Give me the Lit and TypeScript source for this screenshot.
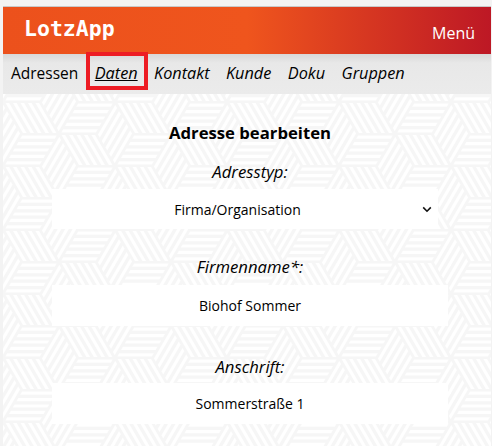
import { LitElement, html, css, unsafeCSS } from "lit";
import { customElement } from "lit/decorators.js";

type P = [number, number];
const L = 112 / 3;
const R = 32;
const S = L / 2;
const fmt = (p: P) => `${p[0].toFixed(2)},${p[1].toFixed(2)}`;

function rhomb(o: P, u: P, v: P): string {
  let out = "";
  const inset = 0.035;
  for (let k = 0; k < 5; k++) {
    const a = (k + 0.25) / 5;
    const b = (k + 0.75) / 5;
    const at = (s: number, t: number): P => [o[0] + u[0] * s + v[0] * t, o[1] + u[1] * s + v[1] * t];
    out += `<polygon points='${fmt(at(a, inset))} ${fmt(at(b, inset))} ${fmt(at(b, 1 - inset))} ${fmt(at(a, 1 - inset))}'/>`;
  }
  return out;
}

function tile(): string {
  let shapes = "";
  const x0 = 18.67;
  const y0 = 40;
  for (let i = -2; i <= 2; i++) {
    for (let j = -3; j <= 3; j++) {
      const ox = x0 + i * 112 + j * 56;
      const oy = y0 + j * 32;
      shapes += rhomb([ox, oy], [-S, R], [L, 0]);
      shapes += rhomb([ox - S, oy - R], [L, 0], [S, R]);
      shapes += rhomb([ox + L, oy], [-S, -R], [S, -R]);
    }
  }
  const svg = `<svg xmlns='http://www.w3.org/2000/svg' width='112' height='64' viewBox='0 0 112 64'><rect width='112' height='64' fill='#f6f6f6'/><g fill='#fff'>${shapes}</g></svg>`;
  return `url("data:image/svg+xml,${encodeURIComponent(svg)}")`;
}

const chevron = `url("data:image/svg+xml,${encodeURIComponent(
  "<svg xmlns='http://www.w3.org/2000/svg' width='10' height='7' viewBox='0 0 10 7'><path d='M1.2 1.4 5 5.2 8.8 1.4' fill='none' stroke='#111' stroke-width='1.6'/></svg>"
)}")`;

@customElement("app-root")
export class AppRoot extends LitElement {
  static styles = css`
    :host {
      display: block;
      height: 446px;
      overflow: hidden;
      box-sizing: border-box;
      padding: 7px 1px 0 3px;
      background: #f3f3f3;
      font-family: "Open Sans", "Noto Sans", sans-serif;
      color: #000;
    }
    .header {
      height: 47px;
      box-shadow: 0 -1px 0 #c9c9c9;
      background: linear-gradient(90deg, #ec511c 0%, #ef551d 50%, #bd1825 100%);
      display: flex;
      align-items: center;
      justify-content: space-between;
      padding: 0 16px 0 21px;
      color: #fff;
      position: relative;
    }
    .logo {
      font-family: "DejaVu Sans Mono", monospace;
      font-weight: 700;
      font-size: 21.5px;
      position: relative;
      top: -2px;
    }
    .menu {
      font-size: 16px;
      position: relative;
      top: 2px;
    }
    .nav {
      height: 40px;
      background: linear-gradient(180deg, #d8d8d8 0, #e8e8e8 9px, #ebebeb 100%);
      display: flex;
      align-items: center;
      gap: 16.4px;
      padding: 0 0 2px 8px;
      box-sizing: border-box;
      font-size: 16.3px;
    }
    .nav a {
      color: #000;
      text-decoration: none;
      font-style: italic;
      position: relative;
    }
    .nav a.plain {
      font-style: normal;
      font-size: 15.5px;
    }
    .nav a.active {
      text-decoration: underline;
    }
    .nav a.active::after {
      content: "";
      position: absolute;
      left: -9px;
      right: -10px;
      top: -10px;
      bottom: -6px;
      border: 4px solid #ed1c24;
    }
    .page {
      height: 352px;
      background-image: ${unsafeCSS(tile())};
      background-repeat: repeat;
      padding-left: 49px;
      box-sizing: border-box;
    }
    .form {
      width: 396px;
      display: flex;
      flex-direction: column;
      align-items: flex-start;
    }
    h2 {
      margin: 27px 0 0;
      width: 100%;
      text-align: center;
      font-size: 16.7px;
      line-height: 24px;
      font-weight: 700;
    }
    label {
      width: 100%;
      text-align: center;
      font-style: italic;
      font-size: 16.7px;
      line-height: 22px;
      display: block;
    }
    .l1 { margin-top: 16px; }
    .l2 { margin-top: 27px; }
    .l3 { margin-top: 30px; }
    select,
    input {
      border: 0;
      outline: 0;
      border-radius: 0;
      background-color: #fff;
      font-family: inherit;
      font-size: 14px;
      color: #000;
      margin: 0;
      padding: 0;
      display: block;
      box-sizing: border-box;
      text-align: center;
    }
    select {
      appearance: none;
      width: 386px;
      height: 40px;
      margin-top: 6px;
      padding-right: 15px;
      text-align-last: center;
      background-image: ${unsafeCSS(chevron)};
      background-repeat: no-repeat;
      background-position: right 6px center;
    }
    input {
      width: 396px;
      height: 41px;
      margin-top: 7px;
    }
    .l3 + input { margin-top: 5px; }
  `;

  render() {
    return html`
      <div class="header">
        <span class="logo">LotzApp</span>
        <span class="menu">Menü</span>
      </div>
      <nav class="nav">
        <a class="plain" href="#">Adressen</a>
        <a class="active" href="#">Daten</a>
        <a href="#">Kontakt</a>
        <a href="#">Kunde</a>
        <a href="#">Doku</a>
        <a href="#">Gruppen</a>
      </nav>
      <main class="page">
        <form class="form">
          <h2>Adresse bearbeiten</h2>
          <label class="l1" for="t">Adresstyp:</label>
          <select id="t"><option>Firma/Organisation</option></select>
          <label class="l2" for="f">Firmenname*:</label>
          <input id="f" value="Biohof Sommer" />
          <label class="l3" for="a">Anschrift:</label>
          <input id="a" value="Sommerstraße 1" />
        </form>
      </main>
    `;
  }
}
